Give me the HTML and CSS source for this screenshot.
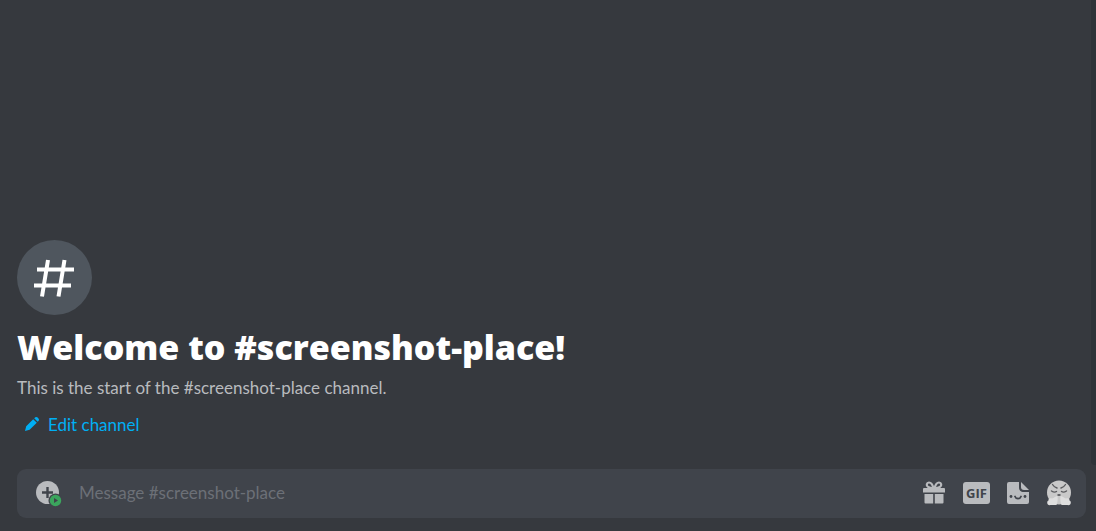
FILE: index.html
```html
<!DOCTYPE html>
<html lang="en">
<head>
<meta charset="utf-8">
<title>#screenshot-place</title>
<link rel="stylesheet" href="styles.css">
</head>
<body>
<main class="chat">
  <section class="messages">
    <div class="welcome">
      <div class="channel-icon">
        <svg width="42" height="42" viewBox="0 0 42 42" fill="none" stroke="#fff" stroke-width="4" aria-hidden="true">
          <path d="M3 12.500H40M0 28.500H37M14 3L8 39.500M30.500 3L24.500 39.500"/>
        </svg>
      </div>
      <h1 class="title">Welcome to #screenshot-place!</h1>
      <p class="intro">This is the start of the #screenshot-place channel.</p>
      <button class="edit" type="button">
        <svg width="16" height="16" viewBox="0 0 16 16" fill="currentColor" aria-hidden="true">
          <path d="M9.200 3.200L12.800 6.800L5.600 13.800L1 15L2.200 10.200ZM10.200 2.300L11.300 1.300Q12.500 0.500 13.600 1.500L14.500 2.400Q15.500 3.500 14.700 4.700L13.700 5.800Z"/>
        </svg>
        Edit channel
      </button>
    </div>
    <div class="scrollbar"></div>
  </section>
  <form class="composer">
    <button class="icon-button attach" type="button" aria-label="Add attachment">
      <svg width="28" height="28" viewBox="0 0 28 28" aria-hidden="true">
        <circle cx="13.500" cy="13.500" r="11.500" fill="#b9bbbe"/>
        <path d="M13.500 8V19M8 13.500H19" stroke="#40444b" stroke-width="2.400"/>
        <circle cx="21.500" cy="21.500" r="7" fill="#40444b"/>
        <circle cx="21.500" cy="21.500" r="5.700" fill="#3ba55d"/>
        <path d="M20 19L24 21.500L20 24Z" fill="#40444b"/>
      </svg>
    </button>
    <input class="message-input" type="text" aria-label="Message #screenshot-place" placeholder="Message #screenshot-place">
    <div class="actions">
      <button class="icon-button" type="button" aria-label="Send a gift">
        <svg width="26" height="26" viewBox="0 0 26 26" fill="#b9bbbe" aria-hidden="true">
          <path d="M2 9Q2 8 3 8H23Q24 8 24 9V12.500H2ZM3.500 14H12.200V23.500H4.500Q3.500 23.500 3.500 22.500ZM13.800 14H22.500V22.500Q22.500 23.500 21.500 23.500H13.800Z"/>
          <path d="M12.500 8C11.500 4.500 10 2.500 8 2.500C5.500 2.500 5 5.500 7 6.800C8.500 7.800 10.500 8 12.500 8ZM13.500 8C14.500 4.500 16 2.500 18 2.500C20.500 2.500 21 5.500 19 6.800C17.500 7.800 15.500 8 13.500 8Z" fill="none" stroke="#b9bbbe" stroke-width="2.200"/>
        </svg>
      </button>
      <button class="icon-button gif" type="button" aria-label="Open GIF picker">GIF</button>
      <button class="icon-button" type="button" aria-label="Open sticker picker">
        <svg width="24" height="24" viewBox="0 0 24 24" aria-hidden="true">
          <path fill="#b9bbbe" d="M3 1H13V6C13 9.500 14.500 11 18 11H23V21Q23 23 21 23H3Q1 23 1 21V3Q1 1 3 1Z"/>
          <path fill="#b9bbbe" d="M15 1L23 9H18Q15 9 15 6Z"/>
          <path fill="none" stroke="#40444b" stroke-width="1.800" stroke-linecap="round" d="M9 15.500C10 18.300 14 18.300 15 15.500"/>
          <circle cx="5" cy="15.500" r="1.400" fill="#40444b"/><circle cx="19" cy="15.500" r="1.400" fill="#40444b"/>
        </svg>
      </button>
      <button class="icon-button" type="button" aria-label="Select emoji">
        <svg width="26" height="26" viewBox="0 0 26 26" aria-hidden="true">
          <circle cx="13" cy="12.500" r="12" fill="#c9c9c9"/>
          <g fill="none" stroke="#5c5d60" stroke-width="1.400" stroke-linecap="round">
            <path d="M6.500 4.500Q8 7 11 8M19.500 4.500Q18 7 15 8M5.500 11Q8.500 13 10.500 11.500M20.500 11Q17.500 13 15.500 11.500"/>
          </g>
          <ellipse cx="13" cy="15" rx="1.800" ry="1" fill="#5c5d60"/>
          <path fill="#dedede" d="M11.500 16C9 16.500 8 18 6 18.500C3 18 2.500 19 2.500 20.500C1 21 1 23 1.500 24Q2 25.500 4.500 25H10.500C11.500 23 12 19 11.500 16ZM14.500 16C17 16.500 18 18 20 18.500C23 18 23.500 19 23.500 20.500C25 21 25 23 24.500 24Q24 25.500 21.500 25H15.500C14.500 23 14 19 14.500 16Z"/>
        </svg>
      </button>
    </div>
  </form>
</main>
</body>
</html>
```
FILE: styles.css
```css
* { box-sizing: border-box; }
body {
  margin: 0;
  background: #36393e;
  color: #fff;
  font-family: Lato, "Open Sans", sans-serif;
}
button {
  border: 0;
  padding: 0;
  background: none;
  color: inherit;
  font: inherit;
  cursor: pointer;
}
svg { display: block; }
.chat {
  display: flex;
  flex-direction: column;
  min-height: 100vh;
}
.messages {
  flex: 1;
  display: flex;
  justify-content: space-between;
}
.welcome {
  align-self: flex-end;
  padding: 16px 17px 27px;
}
.channel-icon {
  display: grid;
  place-items: center;
  width: 75px;
  height: 75px;
  border-radius: 50%;
  background: #4f565e;
}
.title {
  margin: 10px 0 9px;
  font: 800 34px/44px "Open Sans", sans-serif;
}
.intro {
  margin: 0;
  color: #b9bbbe;
  font-size: 17px;
  line-height: 20px;
}
.edit {
  display: flex;
  align-items: center;
  gap: 8px;
  margin-top: 8px;
  padding: 0 7px;
  height: 36px;
  color: #00aff4;
  font-size: 17px;
}
.scrollbar {
  width: 5px;
  margin-bottom: 4px;
  border-bottom-left-radius: 4px;
  background: #2e3338;
}
.composer {
  display: flex;
  align-items: center;
  height: 49px;
  margin: 0 10px 13px 17px;
  padding: 0 14px 2px 17px;
  border-radius: 9px;
  background: #40444b;
}
.message-input {
  flex: 1;
  min-width: 0;
  margin-left: 17px;
  padding: 0;
  border: 0;
  outline: 0;
  background: none;
  color: #dcddde;
  font: 17px/24px Lato, sans-serif;
}
.message-input::placeholder { color: #6c7077; }
.actions {
  display: flex;
  align-items: center;
  gap: 16px;
}
.gif {
  width: 27px;
  height: 22px;
  border-radius: 3px;
  background: #b9bbbe;
  color: #40444b;
  font: 700 13px/22px "Open Sans", sans-serif;
}
```
